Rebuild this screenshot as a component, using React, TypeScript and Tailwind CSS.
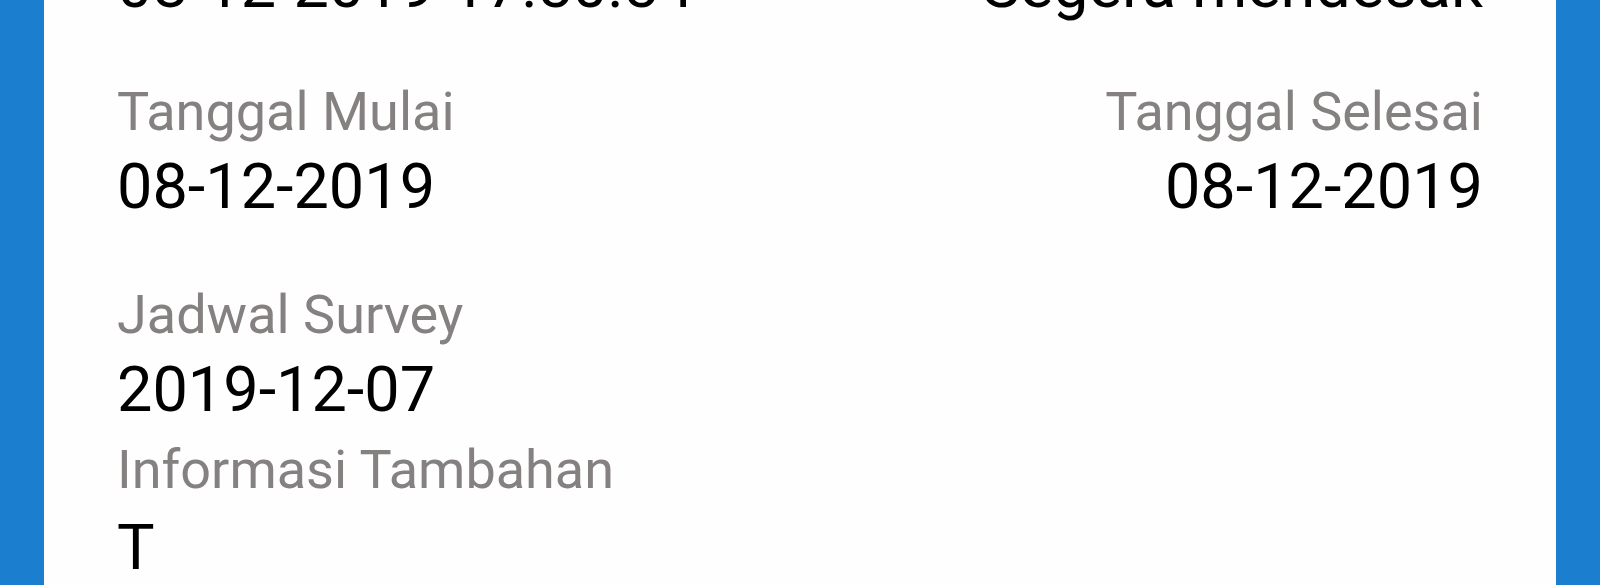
import React from "react";

type Field = { label: string; value: string };

const Item = ({ label, value, right, gap }: Field & { right?: boolean; gap?: boolean }) => (
  <div className={right ? "flex flex-col items-end text-right" : "flex flex-col"}>
    {label && <p className="text-[54px] leading-[63px] text-[#858181]">{label}</p>}
    <p className={gap ? "mt-[3px] text-[63px] leading-[88px] text-black" : "text-[63px] leading-[88px] text-black"}>
      {value}
    </p>
  </div>
);

const App = () => {
  return (
    <div className="h-[585px] w-[1600px] overflow-hidden bg-[#1b7ecf] px-[44px] font-['Roboto',sans-serif]">
      <div className="flex h-full flex-col bg-[#fefefe] px-[73px]">
        {/* tanggal lapor + prioritas */}
        <div className="-mt-[58px] flex justify-between">
          <Item label="" value="08-12-2019 17:50:54" />
          <Item label="" value="Segera mendesak" right />
        </div>

        {/* mulai / selesai */}
        <div className="mt-[50px] flex justify-between">
          <Item label="Tanggal Mulai" value="08-12-2019" />
          <Item label="Tanggal Selesai" value="08-12-2019" right />
        </div>

        <div className="mt-[52px]">
          <Item label="Jadwal Survey" value="2019-12-07" />
        </div>
        <div className="mt-[4px]">
          <Item label="Informasi Tambahan" value="T" gap />
        </div>
      </div>
    </div>
  );
};

export default App;
